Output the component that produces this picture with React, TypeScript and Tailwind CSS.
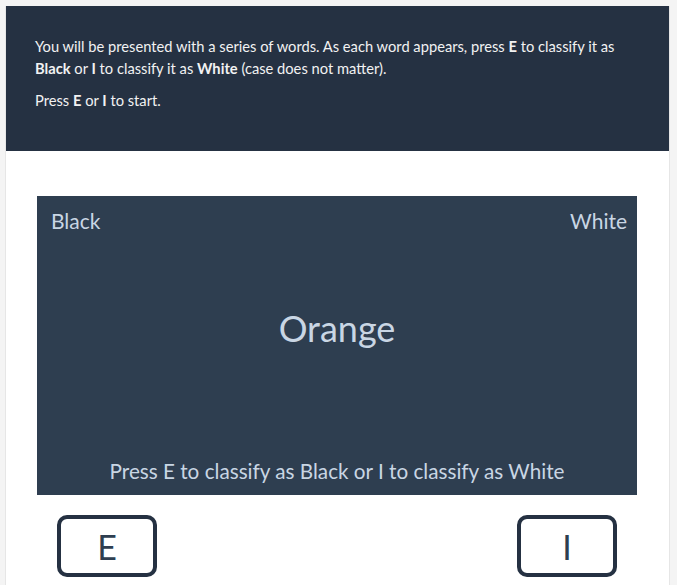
import { useState } from 'react'

export default function App() {
  const [word] = useState('Orange')

  return (
    <div className="min-h-screen bg-[#f4f4f4] pt-[6px] pl-[5px] font-['Lato',sans-serif]">
      <div className="w-[665px] min-h-[600px] bg-white border-x border-[#e6e6e6]">
        {/* Instructions */}
        <div className="bg-[#253142] pl-[29px] pr-[30px] pt-[29px] pb-[30px] text-[14.7px] leading-[22px] text-[#f2f2f2]">
          <p className="mb-[10px]">
            You will be presented with a series of words. As each word appears, press <b>E</b> to classify it as{' '}
            <b>Black</b> or <b>I</b> to classify it as <b>White</b> (case does not matter).
          </p>
          <p className="mb-[10px]">
            Press <b>E</b> or <b>I</b> to start.
          </p>
        </div>

        {/* Task */}
        <div className="pt-[45px] pl-[31px]">
          <div className="w-[600px] h-[299px] bg-[#2e3e50] text-[#c9d6e4] flex flex-col">
            <div className="flex justify-between pl-[14px] pr-[10px] pt-[13px] text-[21px] leading-[24px]">
              <span>Black</span>
              <span>White</span>
            </div>
            <div className="mt-[77px] text-center text-[36px] leading-[36px]">{word}</div>
            <div className="mt-[113px] text-center text-[20.7px] leading-[24px]">
              Press E to classify as Black or I to classify as White
            </div>
          </div>

          <div className="w-[600px] flex justify-between px-[20px] mt-[20px]">
            <div className="w-[100px] h-[62px] border-[4px] border-[#253142] rounded-[10px] flex items-center justify-center text-[34px] text-[#2e3e50]">
              E
            </div>
            <div className="w-[100px] h-[62px] border-[4px] border-[#253142] rounded-[10px] flex items-center justify-center text-[34px] text-[#2e3e50]">
              I
            </div>
          </div>
        </div>
      </div>
    </div>
  )
}
